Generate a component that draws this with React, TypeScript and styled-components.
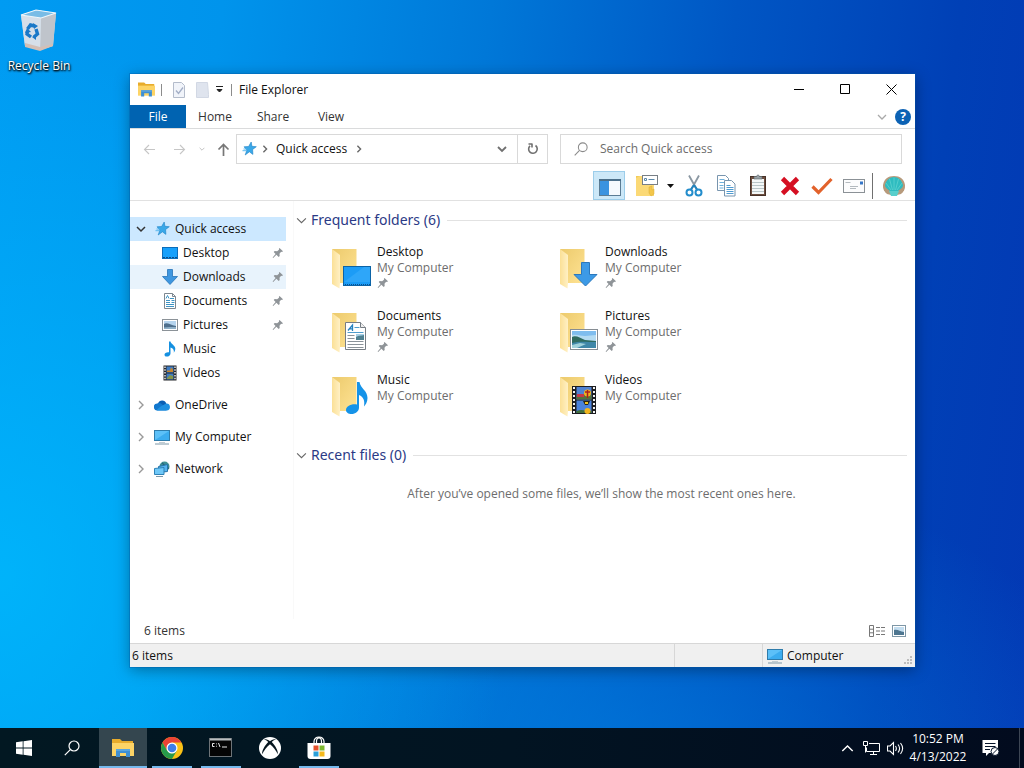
import React from "react";
import styled, { createGlobalStyle, css } from "styled-components";

const GlobalStyle = createGlobalStyle`
  *, *::before, *::after { box-sizing: border-box; }
  body {
    margin: 0;
    font-family: "Open Sans", "Noto Sans", sans-serif;
    font-size: 12px;
    line-height: 16px;
    color: #111;
  }
  button, input {
    font: inherit;
    color: inherit;
    margin: 0;
    padding: 0;
    border: 0;
    background: none;
  }
  button { display: flex; align-items: center; }
  svg { display: block; flex: none; }
  h2, p, ul { margin: 0; padding: 0; font-weight: 400; }
  ul { list-style: none; }
`;

/* ---------- Desktop ---------- */

const Screen = styled.div`
  display: flex;
  flex-direction: column;
  min-height: 100vh;
  background:
    radial-gradient(ellipse 50% 70% at 0% 75%, rgba(0, 190, 255, 0.7), rgba(0, 190, 255, 0) 100%),
    radial-gradient(ellipse 50% 40% at 60% 100%, rgba(0, 130, 225, 0.6), rgba(0, 130, 225, 0) 100%),
    linear-gradient(97deg, #009bf2 0%, #0094ec 20%, #0078d8 44%, #0056c4 66%, #0040b6 86%, #0338b4 100%);
`;

const Desktop = styled.main`
  position: relative;
  display: flex;
  flex: 1;
  padding: 74px 109px 61px 130px;
`;

const DesktopShortcut = styled.button`
  position: absolute;
  top: 6px;
  left: 2px;
  width: 74px;
  flex-direction: column;
  gap: 4px;
  color: #fff;
  text-shadow: 0 1px 2px #000, 1px 1px 2px #000;
  white-space: nowrap;
`;

/* ---------- Window frame ---------- */

const Window = styled.section`
  display: flex;
  flex-direction: column;
  flex: 1;
  min-width: 0;
  background: #fff;
  box-shadow: 0 0 0 1px rgba(0, 90, 170, 0.35), 0 3px 14px rgba(0, 0, 0, 0.35);
`;

const TitleBar = styled.header`
  display: flex;
  align-items: center;
  height: 31px;
  padding: 0 1px 0 7px;
`;

const QuickTools = styled.div`
  display: flex;
  align-items: center;
  flex: 1;
`;

const QuickButton = styled.button<{ $width: number }>`
  width: ${(p) => p.$width}px;
  height: 22px;
  justify-content: center;
`;

const TitleDivider = styled.span`
  width: 1px;
  height: 12px;
  background: #8c8c8c;
`;

const FirstDivider = styled(TitleDivider)`
  margin-left: 5px;
`;

const WindowTitle = styled.span`
  padding-left: 7px;
`;

const CaptionButton = styled.button`
  width: 46px;
  height: 30px;
  justify-content: center;
`;

const TabStrip = styled.nav`
  display: flex;
  align-items: stretch;
  height: 24px;
  border-bottom: 1px solid #dadbdc;
`;

const Tab = styled.button<{ $active?: boolean }>`
  justify-content: center;
  width: 58px;
  color: #333;
  ${(p) =>
    p.$active &&
    css`
      width: 56px;
      background: #0063b1;
      color: #fff;
    `}
`;

const TabTools = styled.div`
  display: flex;
  align-items: center;
  gap: 8px;
  margin-left: auto;
  padding-right: 4px;
`;

const NavRow = styled.div`
  display: grid;
  grid-template-columns: auto minmax(0, 312fr) minmax(0, 342fr);
  column-gap: 12px;
  align-items: center;
  height: 40px;
  padding: 0 13px 0 4px;
`;

const NavButtons = styled.div`
  display: flex;
  margin-right: -12px;
`;

const NavButton = styled.button<{ $width: number }>`
  width: ${(p) => p.$width}px;
  height: 30px;
  justify-content: center;
`;

const AddressBar = styled.div`
  display: flex;
  align-items: center;
  height: 30px;
  border: 1px solid #d9d9d9;
`;

const Crumb = styled.button<{ $icon?: boolean }>`
  height: 28px;
  padding: 0 ${(p) => (p.$icon ? 4 : 8)}px;
`;

const CrumbArrow = styled.button`
  height: 28px;
  width: 7px;
  justify-content: center;
`;

const AddressButton = styled.button<{ $divided?: boolean }>`
  width: 30px;
  height: 28px;
  justify-content: center;
  border-left: ${(p) => (p.$divided ? "1px solid #d9d9d9" : "0")};
`;

const Spacer = styled.span`
  flex: 1;
`;

const SearchBox = styled.label`
  display: flex;
  align-items: center;
  height: 30px;
  padding-left: 13px;
  gap: 12px;
  border: 1px solid #d9d9d9;
`;

const SearchInput = styled.input`
  flex: 1;
  min-width: 0;
  outline: none;
  &::placeholder { color: #6d6d6d; opacity: 1; }
`;

const Toolbar = styled.div`
  display: flex;
  align-items: center;
  justify-content: flex-end;
  height: 32px;
  padding: 2px 5px 0 0;
  border-bottom: 1px solid #e1e1e1;
`;

const ToolButton = styled.button<{ $narrow?: boolean; $pressed?: boolean }>`
  width: ${(p) => (p.$narrow ? 16 : 32)}px;
  height: 29px;
  justify-content: center;
  ${(p) =>
    p.$pressed &&
    css`
      margin-right: 5px;
      padding: 3px 0 0 2px;
      background: #cce8f8;
      border: 1px solid #9ccdea;
    `}
`;

const ToolDivider = styled.span`
  width: 1px;
  height: 26px;
  margin: 0 5px 0 2px;
  background: #707070;
`;

/* ---------- Window body ---------- */

const Body = styled.div`
  display: flex;
  flex: 1;
`;

const Sidebar = styled.nav`
  width: 164px;
  padding: 16px 7px 0 0;
  border-right: 1px solid #f9f9f9;
`;

const TreeGroup = styled.ul`
  margin-bottom: 8px;
`;

const TreeRow = styled.button<{ $child?: boolean; $state?: "selected" | "hover" }>`
  width: 100%;
  height: 24px;
  padding: 0 2px 0 ${(p) => (p.$child ? 32 : 5)}px;
  background: ${(p) =>
    p.$state === "selected" ? "#cce8ff" : p.$state === "hover" ? "#e8f3fc" : "transparent"};
`;

const Twisty = styled.span`
  display: flex;
  justify-content: center;
  width: 11px;
  margin-right: 8px;
`;

const TreeLabel = styled.span`
  flex: 1;
  padding-left: 5px;
  text-align: left;
  white-space: nowrap;
`;

const Content = styled.section`
  flex: 1;
  min-width: 0;
  padding: 7px 8px 0 2px;
`;

const GroupHeading = styled.h2`
  display: flex;
  align-items: center;
  height: 24px;
  gap: 4px;
  font-family: "Noto Sans", "Open Sans", sans-serif;
  font-size: 14px;
  line-height: 24px;
  color: #2b3a86;
  &::after {
    content: "";
    flex: 1;
    height: 1px;
    margin-left: 3px;
    background: #e2e2e2;
  }
`;

const TileGrid = styled.ul`
  display: grid;
  grid-template-columns: repeat(auto-fill, 228px);
  grid-auto-rows: 64px;
  margin: 12px 0 7px;
  padding-left: 35px;
`;

const Tile = styled.li`
  display: flex;
`;

const TileText = styled.div`
  display: flex;
  flex-direction: column;
`;

const Muted = styled.span`
  color: #6d6d6d;
`;

const EmptyNote = styled.p`
  padding-top: 19px;
  text-align: center;
  color: #6d6d6d;
`;

const InfoBar = styled.div`
  display: flex;
  align-items: center;
  justify-content: space-between;
  height: 24px;
  padding: 0 9px 0 14px;
  color: #333;
`;

const ViewButtons = styled.div`
  display: flex;
  gap: 6px;
`;

const StatusBar = styled.footer`
  display: flex;
  align-items: stretch;
  height: 24px;
  background: #f0f0f0;
  border-top: 1px solid #d7d7d7;
`;

const StatusCell = styled.div<{ $width?: number }>`
  display: flex;
  align-items: center;
  gap: 4px;
  padding-left: ${(p) => (p.$width ? 4 : 2)}px;
  ${(p) =>
    p.$width
      ? css`
          width: ${p.$width}px;
          border-left: 1px solid #d7d7d7;
        `
      : css`
          flex: 1;
        `}
`;

const Grip = styled.span`
  display: flex;
  align-self: flex-end;
  margin-left: auto;
  padding: 0 2px 2px 0;
`;

/* ---------- Taskbar ---------- */

const Taskbar = styled.footer`
  display: flex;
  height: 40px;
  background: linear-gradient(90deg, #021822, #021422 50%, #020b1e);
  color: #fff;
`;

const TaskButton = styled.button<{ $active?: boolean; $running?: boolean }>`
  position: relative;
  width: 48px;
  height: 40px;
  justify-content: center;
  background: ${(p) => (p.$active ? "#34464f" : "transparent")};
  &::after {
    content: "";
    position: absolute;
    bottom: 0;
    left: ${(p) => (p.$active ? 0 : 4)}px;
    right: ${(p) => (p.$active ? 0 : 4)}px;
    height: 2px;
    background: ${(p) => (p.$running ? "#76b9ed" : "transparent")};
  }
`;

const TaskApps = styled.div`
  display: flex;
  gap: 1px;
  margin-left: 3px;
`;

const Tray = styled.div`
  display: flex;
  align-items: center;
  margin-left: auto;
`;

const TrayButton = styled.button<{ $wide?: boolean }>`
  width: ${(p) => (p.$wide ? 52 : 24)}px;
  height: 40px;
  padding-right: ${(p) => (p.$wide ? 4 : 0)}px;
  justify-content: center;
`;

const Clock = styled.button`
  flex-direction: column;
  justify-content: center;
  width: 58px;
  height: 40px;
  margin-left: 2px;
  line-height: 18px;
  white-space: nowrap;
`;

const ShowDesktop = styled.button`
  width: 5px;
  height: 40px;
  border-left: 1px solid #3d4654;
`;

/* ---------- Small glyphs ---------- */

const Chevron = ({ dir, color = "#555", size = 10, weight = 1 }: { dir: "down" | "right" | "up"; color?: string; size?: number; weight?: number }) => (
  <svg width={size} height={size} viewBox="0 0 10 10" fill="none" stroke={color} strokeWidth={weight}>
    <path d={dir === "down" ? "M1 3l4 4 4-4" : dir === "up" ? "M1 7l4-4 4 4" : "M3 1l4 4-4 4"} />
  </svg>
);

const Pin = () => (
  <svg width="12" height="14" viewBox="0 0 12 14">
    <path d="M7.500 2L11 5.200l-1 .7-.9-.1-1.600 1.900.2 2.200-1 1-2.300-2.200L1.200 12l-.6-.5L3.600 8 1.700 6l1-1 2.400.2L7 3.800l-.1-1z" fill="#8f9498" />
  </svg>
);

const StarIcon = () => (
  <svg width="16" height="16" viewBox="0 0 16 16">
    <path d="M10.200 1l.7 4.300 4.400.4-3.700 2.800.3 4.900-3.500-2.600-4.200 3.200 1.700-5L3 5.800l4.600-.3z" fill="#3aa8e8" stroke="#1c82c6" strokeWidth=".6" />
    <path d="M2.500 8h3.500M1.500 9.700h4" stroke="#4cb2ee" strokeWidth=".9" />
  </svg>
);

const DesktopArt = () => (
  <>
    <rect x=".5" y="2.500" width="15" height="11" fill="#16a0fb" stroke="#0b6dba" />
    <path d="M1 12.500h14" stroke="#0a4c86" strokeWidth="1" strokeDasharray="2 1" />
  </>
);

const ArrowIcon = () => <path d="M5.500.5h5v7h5L8 15.500.5 7.500h5z" fill="#3f97e0" stroke="#2673b8" strokeWidth=".8" />;

const DocIcon = () => (
  <>
    <path d="M2.500.5h8l3 3v12h-11z" fill="#fff" stroke="#7d8790" />
    <path d="M10.500.5v3h3" fill="none" stroke="#7d8790" />
    <path d="M4 5.500L5.500 2.500 7 5.500M8 5.500h4M4 7.500h4M9.500 7.500h3M4 9.500h4M9.500 9.500h3M4 11.500h8M4 13.500h8" stroke="#3f94c4" fill="none" />
  </>
);

const PictureArt = () => (
  <>
    <rect x=".5" y="2.500" width="15" height="11" fill="#fff" stroke="#8b9298" />
    <rect x="2" y="4" width="12" height="8" fill="#b5d4ee" />
    <path d="M2 7c3-2 6 1 12 2v3H2z" fill="#4e6f8c" />
    <path d="M2 10.500c4-1 8-.5 12-.5v2H2z" fill="#8fb0c8" />
  </>
);

const MusicIcon = () => (
  <path d="M7 .5h1.500c.4 2.600 4.800 3.800 4.800 7.300 0 1.800-1 3.400-1.500 3.900.5-2.800-.5-4.400-3.300-5.300v6.100c0 2-1.900 3.100-3.600 3.100-1.400 0-2.400-.7-2.400-1.900 0-1.500 1.900-2.700 4.500-2.400z" fill="#1590e0" />
);

const FilmIcon = () => (
  <>
    <rect x="1.500" y=".5" width="13" height="15" fill="#26282c" />
    <path d="M3 1.500v13M13 1.500v13" stroke="#f1f1f1" strokeWidth="1.400" strokeDasharray="1.500 1.300" />
    <rect x="4.500" y="1.500" width="7" height="6" fill="#3f7cc4" />
    <rect x="4.500" y="8.500" width="7" height="6" fill="#3f7cc4" />
    <path d="M5 5.500h3l1-3 2 2v2.500H5z" fill="#c8862c" />
    <path d="M5 13l3-3 3 1v3H5z" fill="#84954a" />
  </>
);

const CloudIcon = () => (
  <>
    <path d="M4 6.500A4.400 4.400 0 0 1 12.300 6.500L9 10 3 12z" fill="#0a5fb4" />
    <path d="M3.500 13.500a3.500 3.500 0 0 1-.3-7c2-1 4-.4 5 1l5 4.900-1 1.100z" fill="#1278ce" />
    <path d="M2.500 13.300c2-2.800 5-4.200 9.500-6.800a3.500 3.500 0 0 1 .8 7h-9.300z" fill="#1e90e0" />
  </>
);

const ComputerArt = () => (
  <>
    <rect x=".5" y="1.500" width="15" height="10" fill="#5cc0f8" stroke="#2f7cab" />
    <path d="M1 11l14-9v9z" fill="#3bacef" />
    <path d="M5 13.500h6" stroke="#c1ccd3" />
    <path d="M1 15h14" stroke="#7c98a8" />
  </>
);

const NetworkArt = () => (
  <>
    <circle cx="10.500" cy="5.500" r="5" fill="#3d8f92" />
    <path d="M8 2c2 1 2 3 4 3s1 3 3 2" stroke="#27607c" strokeWidth="1.200" fill="none" />
    <path d="M4.500 5.500l9-2v7l-9 1z" fill="#56b4ee" stroke="#2674ac" />
    <path d="M.5 7.500l9.500-1v7H.5z" fill="#6fc8f8" stroke="#2f83b8" />
    <path d="M2 15.500h7" stroke="#7c98a8" />
  </>
);

const smallArt = {
  desktop: DesktopArt,
  downloads: ArrowIcon,
  documents: DocIcon,
  pictures: PictureArt,
  music: MusicIcon,
  videos: FilmIcon,
  cloud: CloudIcon,
  computer: ComputerArt,
  network: NetworkArt,
};

type ArtName = keyof typeof smallArt;

const SmallIcon = ({ name }: { name: ArtName }) => {
  const Art = smallArt[name];
  return (
    <svg width="16" height="16" viewBox="0 0 16 16">
      <Art />
    </svg>
  );
};

/* ---------- Folder tiles ---------- */

const overlays: Record<string, React.ReactNode> = {
  desktop: (
    <>
      <rect x="12.500" y="22.500" width="27" height="19" fill="#1c9cf6" stroke="#0c63a6" />
      <path d="M13 38L33 23h6v15z" fill="#3aaefb" opacity=".6" />
      <path d="M14 40.500h25" stroke="#0b4f8c" strokeDasharray="1 1" />
    </>
  ),
  downloads: <path d="M22.500 18.500h8v12h7.500L26.500 42 15 30.500h7.500z" fill="#3d9ae6" stroke="#2b78bd" />,
  documents: (
    <>
      <path d="M14.500 14.500h15l5 5v22h-20z" fill="#fff" stroke="#767d84" />
      <path d="M29.500 14.500v5h5" fill="#eee" stroke="#767d84" />
      <path d="M17 22.500l4.500-5.500v6M18.500 20.800h3" stroke="#2481c0" strokeWidth="1.300" fill="none" />
      <path d="M23.500 19.500h5M16.500 24.500h16" stroke="#4f9ccc" />
      <path d="M16.500 27.500h7M16.500 30.500h7M16.500 33.500h16M16.500 36.500h16M16.500 39.500h16" stroke="#8a9299" />
      <rect x="25" y="26" width="8" height="6" fill="#4f8191" />
      <path d="M25 29c3-2 5-1 8-2v-1h-8z" fill="#a5cfe6" />
    </>
  ),
  pictures: (
    <>
      <rect x="11.500" y="21.500" width="27" height="20" fill="#fff" stroke="#868d93" />
      <rect x="13" y="23" width="24" height="17" fill="#7fbdee" />
      <path d="M13 27c5-1 9 1 13 1s7-1 11-1v6H13z" fill="#b4dbf2" />
      <path d="M13 29c4-2 8 1 13 3l11 1v2H13z" fill="#2f6b60" />
      <path d="M13 35c7-2 14-1 24-1v6H13z" fill="#3f87a8" />
      <path d="M13 37l8-2 6 1-9 4h-5z" fill="#9fd0da" />
    </>
  ),
  music: (
    <path d="M26 10h2.500c1 6.500 8 8.500 8 16 0 4-2 7-3.500 8.500 1-6-.5-9.500-5-11.500v12.500c0 4-3.800 6.500-7.500 6.500-3 0-5.500-1.500-5.500-4 0-3.500 5-6.500 11-5.500z" fill="#1593e8" />
  ),
  videos: (
    <>
      <rect x="13" y="14" width="24" height="28" fill="#1c1d20" />
      <path d="M15 15v27M35 15v27" stroke="#f4f4f4" strokeWidth="2" strokeDasharray="2 2" />
      <rect x="17.500" y="15" width="15" height="12.500" fill="#5082d2" />
      <rect x="17.500" y="28.500" width="15" height="12.500" fill="#4a82dc" />
      <path d="M17.500 23c4-2 8 0 15 0v4.500h-15z" fill="#54723c" />
      <path d="M17.500 39c5-2 9 0 15 0v2h-15z" fill="#42703c" />
      <path d="M18 22h7v3h-7z" fill="#c7384a" />
      <circle cx="28.500" cy="21" r="3.500" fill="#f1b51f" />
      <path d="M26 20h5M28.500 18v8" stroke="#a82020" strokeWidth="1.500" />
      <path d="M24 29h7l-2 4h-3z" fill="#2b2413" />
      <path d="M26 30h3v2h-3z" fill="#f1c21f" />
      <circle cx="28.500" cy="39" r="3" fill="#f1b51f" />
    </>
  ),
};

const FolderIcon = ({ kind }: { kind: string }) => (
  <svg width="46" height="48" viewBox="0 0 46 48">
    <defs>
      <linearGradient id={`back-${kind}`} x1="0" y1="0" x2="1" y2="1">
        <stop offset="0" stopColor="#ecca6c" />
        <stop offset="1" stopColor="#ffe394" />
      </linearGradient>
      <linearGradient id={`flap-${kind}`} x1="0" y1="0" x2="1" y2="0">
        <stop offset="0" stopColor="#fbe096" />
        <stop offset="1" stopColor="#fff0c4" />
      </linearGradient>
    </defs>
    <path d="M1 5h24.500v34H9z" fill={`url(#back-${kind})`} />
    <path d="M1 5l8 6v28l-.5 5.500L1 40z" fill={`url(#flap-${kind})`} />
    {overlays[kind]}
  </svg>
);

/* ---------- Application glyphs ---------- */

const ExplorerIcon = ({ width, height }: { width: number; height: number }) => (
  <svg width={width} height={height} viewBox="0 0 22 18">
    <path d="M0 0h8l2 2h11v4H0z" fill="#e8ac2c" />
    <path d="M0 4h22v13H0z" fill="#fdd466" />
    <path d="M4 18v-8h14v8h-4v-4H8v4z" fill="#3f8fd2" />
    <path d="M4 10h14v2H4z" fill="#5aa5de" />
  </svg>
);

const RecycleBinIcon = () => (
  <svg width="40" height="48" viewBox="0 0 40 48">
    <path d="M2 9l15-5 20 3-3 33-14 4-14-4z" fill="#d5dbe2" opacity=".95" />
    <path d="M22 12l15-5-3 33-13 4z" fill="#bfc4cb" />
    <path d="M2 9l20 3-1 32-15-4z" fill="#d6dfe9" />
    <path d="M2 9l15-5 20 3-15 5z" fill="#79bce6" stroke="#eef6fb" strokeWidth="1.200" />
    <path d="M6 37l15 4 13-3v2l-13 5-15-4z" fill="#d3bfb6" />
    <g fill="none" stroke="#1a78c8" strokeWidth="3.400">
      <path d="M8.500 23l3-4 4 1" />
      <path d="M17 23l1.500 5-3.500 3" />
      <path d="M12 31l-4-3 .5-3" />
    </g>
    <path d="M14 17l5 3-4 3zM17 28l-4 3 4 3zM6 27l2-5 4 4z" fill="#1a78c8" />
  </svg>
);

const WindowsLogo = () => (
  <svg width="16" height="16" viewBox="0 0 16 16" fill="#fff">
    <path d="M0 2.200l6.700-.9v6.300H0zM7.500 1.200L16 0v7.600H7.500zM0 8.400h6.700v6.300L0 13.800zM7.500 8.400H16V16l-8.500-1.200z" />
  </svg>
);

const SearchGlyph = ({ size, color }: { size: number; color: string }) => (
  <svg width={size} height={size} viewBox="0 0 16 16" fill="none" stroke={color} strokeWidth="1.200">
    <circle cx="10" cy="6" r="5" />
    <path d="M6.300 9.700L.8 15.200" />
  </svg>
);

const ChromeIcon = () => (
  <svg width="24" height="24" viewBox="0 0 24 24">
    <circle cx="12" cy="12" r="11" fill="#fbc116" />
    <path d="M2.500 6.500A11 11 0 0 1 21.500 6.500H12L7.200 14.700z" fill="#ea4335" />
    <path d="M2.500 6.500A11 11 0 0 0 12 23l4.800-8.200L12 17.500 7.200 14.700z" fill="#279a4b" />
    <circle cx="12" cy="12" r="5.500" fill="#fff" />
    <circle cx="12" cy="12" r="4.300" fill="#3f7ee8" />
  </svg>
);

const TerminalIcon = () => (
  <svg width="24" height="20" viewBox="0 0 24 20">
    <rect x=".5" y=".5" width="22" height="18" fill="#050505" stroke="#6e7478" />
    <path d="M1 1.500h21" stroke="#b9bec1" strokeWidth="2" />
    <path d="M5.500 5.500H3.500v3h2M7.500 5.500v.8M7.500 7.800v.8M9.500 5l1.500 4M13 9h5" stroke="#e8e8e8" fill="none" />
  </svg>
);

const XboxIcon = () => (
  <svg width="22" height="22" viewBox="0 0 22 22">
    <circle cx="11" cy="11" r="11" fill="#fff" />
    <path d="M5 2.400C7.500 1.600 9.500 3 11 4.200c1.500-1.200 3.500-2.600 6-1.800-1.200 0-3 1-4.200 2.600 3.500 3.500 6.500 8.800 6 12.200C17.200 13.300 14 9.600 11 7.200c-3 2.400-6.200 6.100-7.800 10-.5-3.400 2.500-8.700 6-12.200C8 3.400 6.200 2.400 5 2.400z" fill="#06161f" />
  </svg>
);

const StoreIcon = () => (
  <svg width="24" height="24" viewBox="0 0 24 24">
    <path d="M7 8V5.500a5 4.500 0 0 1 10 0V8M9.500 7V5.500a2.500 3.500 0 0 1 5 0V7" fill="none" stroke="#fff" strokeWidth="1.200" />
    <path d="M.5 7h23v13c0 2-1 3-3 3h-17c-2 0-3-1-3-3z" fill="#fff" />
    <path d="M6.500 9.500h5v5h-5z" fill="#e2502c" />
    <path d="M12.500 9.500h5v5h-5z" fill="#7db72f" />
    <path d="M6.500 15.500h5v5h-5z" fill="#2a9fd8" />
    <path d="M12.500 15.500h5v5h-5z" fill="#f5b91d" />
  </svg>
);

/* ---------- Toolbar glyphs ---------- */

const PanelIcon = () => (
  <svg width="22" height="17" viewBox="0 0 22 17">
    <rect x=".5" y=".5" width="21" height="16" fill="#f4f9fd" stroke="#5b7c94" />
    <path d="M0 1h22" stroke="#4a6f8a" strokeWidth="2" />
    <rect x="1" y="2" width="9" height="14" fill="#3a93e0" />
  </svg>
);

const FolderOptionsIcon = () => (
  <svg width="24" height="24" viewBox="0 0 24 24">
    <path d="M2 2h10v20H2z" fill="#f2cb58" />
    <path d="M2 4l4-2h14v20H2z" fill="#fbd976" />
    <rect x="8.500" y="1.500" width="15" height="9" fill="#fff" stroke="#787f85" />
    <path d="M10.500 4.500h2v2h-2zM14.500 5.500h6" stroke="#5a87a8" fill="none" />
    <path d="M15 19v-6l3-1v4l2-1v5l-3 2z" fill="#f3c64a" stroke="#d8ae3e" strokeWidth=".5" />
  </svg>
);

const ScissorsIcon = () => (
  <svg width="18" height="24" viewBox="0 0 18 24" fill="none">
    <path d="M4 1.500L11.500 15M14 1.500L6.500 15" stroke="#8a97a2" strokeWidth="1.800" />
    <path d="M9 11l3.500 5M9 11l-3.500 5" stroke="#2384be" strokeWidth="2" />
    <circle cx="4.500" cy="18.500" r="3" stroke="#238dcc" strokeWidth="2" />
    <circle cx="13.500" cy="18.500" r="3" stroke="#238dcc" strokeWidth="2" />
  </svg>
);

const CopyIcon = () => (
  <svg width="20" height="22" viewBox="0 0 20 22" fill="#fff" stroke="#7895ae">
    <path d="M1.500.5h8l3 3v12h-11z" />
    <path d="M3.500 4.500h5M3.500 7.500h6M3.500 10.500h4M3.500 13h4" stroke="#6fb0dc" />
    <path d="M8.500 5.500h7l3.500 3.500v12H8.500z" />
    <path d="M10.500 10.500h4M10.500 12.500h7M10.500 14.500h7M10.500 16.500h7M10.500 18.500h7" stroke="#4f9ad0" />
  </svg>
);

const PasteIcon = () => (
  <svg width="18" height="23" viewBox="0 0 18 23">
    <rect x="1.500" y="2.500" width="15" height="19" fill="#6e4f40" stroke="#473228" />
    <rect x="3" y="5" width="12" height="15" fill="#f4f8f8" />
    <path d="M3 8.500h12M3 11.500h12M3 14.500h12M3 17.500h12" stroke="#b9c6c8" />
    <path d="M5 5V2.500h2.500C8 .5 10 .5 10.500 2.500H13V5z" fill="#98a1a6" stroke="#5b646a" strokeWidth=".6" />
  </svg>
);

const CrossIcon = () => (
  <svg width="20" height="20" viewBox="0 0 20 20">
    <path d="M2.500 2.500l15 15M17.500 2.500l-15 15" stroke="#d50f22" strokeWidth="4.600" />
  </svg>
);

const CheckIcon = () => (
  <svg width="22" height="18" viewBox="0 0 22 18">
    <path d="M1.500 9.500l6 6L20.500 2" stroke="#e2622b" strokeWidth="3.200" fill="none" />
  </svg>
);

const MailIcon = () => (
  <svg width="22" height="14" viewBox="0 0 22 14">
    <rect x=".5" y=".5" width="21" height="13" fill="#fcfcfd" stroke="#8b9196" />
    <path d="M2.500 3.500h5M7 7.500h8M7 9.500h6" stroke="#b4babf" />
    <rect x="17" y="2.500" width="3" height="3" fill="#3576c8" />
  </svg>
);

const ShellIcon = () => (
  <svg width="24" height="22" viewBox="0 0 24 22">
    <path d="M1 10C2 4 6 1 12 1s10 3 11 9c.5 4-1.500 7-4 9l-4 1H9l-4-1c-2.500-2-4.500-5-4-9z" fill="#b79a7c" />
    <path d="M3 10c1-5 5-8 9-8s8 3 9 8c0 3-3 4-5 6H8c-2-2-5-3-5-6z" fill="#2fbcc0" />
    <path d="M12 15V2.500M10.500 15L7.500 4M13.500 15l3-11M9 15L4 8M15 15l5-7" stroke="#66d6d2" strokeWidth=".7" />
    <path d="M7 16h10l-2 5H9z" fill="#58cfcc" />
  </svg>
);

const HelpIcon = () => (
  <svg width="16" height="16" viewBox="0 0 16 16">
    <circle cx="8" cy="8" r="8" fill="#0c62b4" />
    <text x="8" y="12" textAnchor="middle" fontSize="12" fontWeight="700" fill="#fff">?</text>
  </svg>
);

const Arrow = ({ dir, color }: { dir: "left" | "right" | "up"; color: string }) => (
  <svg width="13" height="13" viewBox="0 0 13 13" fill="none" stroke={color} strokeWidth={dir === "up" ? 1.7 : 1.1}>
    <path d={dir === "left" ? "M12 6.500H1.500M6 2L1.500 6.500 6 11" : dir === "right" ? "M1 6.500h10.500M7 2l4.500 4.500L7 11" : "M6.500 13V1.500M1.500 6.500l5-5 5 5"} />
  </svg>
);

/* ---------- Data ---------- */

const quickItems: { label: string; art: ArtName; pinned?: boolean }[] = [
  { label: "Desktop", art: "desktop", pinned: true },
  { label: "Downloads", art: "downloads", pinned: true },
  { label: "Documents", art: "documents", pinned: true },
  { label: "Pictures", art: "pictures", pinned: true },
  { label: "Music", art: "music" },
  { label: "Videos", art: "videos" },
];

const roots: { label: string; art: ArtName }[] = [
  { label: "OneDrive", art: "cloud" },
  { label: "My Computer", art: "computer" },
  { label: "Network", art: "network" },
];

export default function App() {
  return (
    <Screen>
      <GlobalStyle />
      <Desktop>
        <DesktopShortcut>
          <RecycleBinIcon />
          Recycle Bin
        </DesktopShortcut>

        <Window aria-label="File Explorer">
          <TitleBar>
            <QuickTools>
              <QuickButton $width={19} aria-label="Window menu">
                <ExplorerIcon width={17} height={15} />
              </QuickButton>
              <FirstDivider />
              <QuickButton $width={34} aria-label="Properties">
                <svg width="14" height="16" viewBox="0 0 14 16" fill="#f1f4fa" stroke="#b4bccb">
                  <path d="M1.500.5h8l3 3v12h-11z" />
                  <path d="M4 8.500l2.500 3 4.500-6" fill="none" stroke="#a3aec6" strokeWidth="1.300" />
                </svg>
              </QuickButton>
              <QuickButton $width={12} aria-label="New folder">
                <svg width="13" height="16" viewBox="0 0 13 16">
                  <path d="M.5.5h11l1 12v3H.5z" fill="#dfe4ee" stroke="#d2d8e4" />
                </svg>
              </QuickButton>
              <QuickButton $width={23} aria-label="Customize toolbar">
                <svg width="7" height="7" viewBox="0 0 7 7">
                  <path d="M0 .5h7M1 3.500h5L3.500 6z" fill="#222" stroke="#222" />
                </svg>
              </QuickButton>
              <TitleDivider />
              <WindowTitle>File Explorer</WindowTitle>
            </QuickTools>
            <CaptionButton aria-label="Minimize">
              <svg width="11" height="11" stroke="#000"><path d="M0 5.500h10" /></svg>
            </CaptionButton>
            <CaptionButton aria-label="Maximize">
              <svg width="11" height="11" fill="none" stroke="#000"><path d="M.5.5h9v9h-9z" /></svg>
            </CaptionButton>
            <CaptionButton aria-label="Close">
              <svg width="11" height="11" stroke="#000"><path d="M.5.5l10 10M10.500.5l-10 10" /></svg>
            </CaptionButton>
          </TitleBar>

          <TabStrip>
            <Tab $active>File</Tab>
            <Tab>Home</Tab>
            <Tab>Share</Tab>
            <Tab>View</Tab>
            <TabTools>
              <button aria-label="Expand ribbon"><Chevron dir="down" color="#a9a9a9" weight={1.3} /></button>
              <button aria-label="Help"><HelpIcon /></button>
            </TabTools>
          </TabStrip>

          <NavRow>
            <NavButtons>
              <NavButton $width={30} aria-label="Back"><Arrow dir="left" color="#c6c6c6" /></NavButton>
              <NavButton $width={30} aria-label="Forward"><Arrow dir="right" color="#c6c6c6" /></NavButton>
              <NavButton $width={16} aria-label="Recent locations"><Chevron dir="down" color="#bdbdbd" size={6} weight={1.5} /></NavButton>
              <NavButton $width={26} aria-label="Up"><Arrow dir="up" color="#777" /></NavButton>
            </NavButtons>
            <AddressBar>
              <Crumb $icon aria-label="Locations"><StarIcon /></Crumb>
              <CrumbArrow aria-label="Browse locations"><Chevron dir="right" color="#666" size={8} weight={1.7} /></CrumbArrow>
              <Crumb>Quick access</Crumb>
              <CrumbArrow aria-label="Browse quick access"><Chevron dir="right" color="#666" size={8} weight={1.7} /></CrumbArrow>
              <Spacer />
              <AddressButton aria-label="Previous locations"><Chevron dir="down" color="#707070" weight={1.8} /></AddressButton>
              <AddressButton $divided aria-label="Refresh">
                <svg width="12" height="12" viewBox="0 0 12 12" fill="none" stroke="#707070" strokeWidth="1.600">
                  <path d="M8.500 2.500A4.300 4.300 0 1 1 3 2.800M5 1H1.500M5 .5v4" />
                </svg>
              </AddressButton>
            </AddressBar>
            <SearchBox>
              <SearchGlyph size={14} color="#8a8a8a" />
              <SearchInput type="text" aria-label="Search Quick access" placeholder="Search Quick access" />
            </SearchBox>
          </NavRow>

          <Toolbar>
            <ToolButton $pressed aria-label="Navigation pane"><PanelIcon /></ToolButton>
            <ToolButton aria-label="Folder options"><FolderOptionsIcon /></ToolButton>
            <ToolButton $narrow aria-label="More folder options">
              <svg width="7" height="4"><path d="M0 0h7L3.500 4z" fill="#111" /></svg>
            </ToolButton>
            <ToolButton aria-label="Cut"><ScissorsIcon /></ToolButton>
            <ToolButton aria-label="Copy"><CopyIcon /></ToolButton>
            <ToolButton aria-label="Paste"><PasteIcon /></ToolButton>
            <ToolButton aria-label="Delete"><CrossIcon /></ToolButton>
            <ToolButton aria-label="Apply"><CheckIcon /></ToolButton>
            <ToolButton aria-label="Email"><MailIcon /></ToolButton>
            <ToolDivider />
            <ToolButton aria-label="Shell settings"><ShellIcon /></ToolButton>
          </Toolbar>

          <Body>
            <Sidebar aria-label="Folders">
              <TreeGroup>
                <li>
                  <TreeRow $state="selected">
                    <Twisty><Chevron dir="down" color="#333" weight={1.5} /></Twisty>
                    <StarIcon />
                    <TreeLabel>Quick access</TreeLabel>
                  </TreeRow>
                </li>
                {quickItems.map((item) => (
                  <li key={item.label}>
                    <TreeRow $child $state={item.label === "Downloads" ? "hover" : undefined}>
                      <SmallIcon name={item.art} />
                      <TreeLabel>{item.label}</TreeLabel>
                      {item.pinned && <Pin />}
                    </TreeRow>
                  </li>
                ))}
              </TreeGroup>
              {roots.map((item) => (
                <TreeGroup key={item.label}>
                  <li>
                    <TreeRow>
                      <Twisty><Chevron dir="right" color="#999" weight={1.4} /></Twisty>
                      <SmallIcon name={item.art} />
                      <TreeLabel>{item.label}</TreeLabel>
                    </TreeRow>
                  </li>
                </TreeGroup>
              ))}
            </Sidebar>

            <Content>
              <GroupHeading>
                <Chevron dir="down" color="#666" size={11} />
                Frequent folders (6)
              </GroupHeading>
              <TileGrid>
                {quickItems.map((item) => (
                  <Tile key={item.label}>
                    <FolderIcon kind={item.art} />
                    <TileText>
                      <span>{item.label}</span>
                      <Muted>My Computer</Muted>
                      {item.pinned && <Pin />}
                    </TileText>
                  </Tile>
                ))}
              </TileGrid>
              <GroupHeading>
                <Chevron dir="down" color="#666" size={11} />
                Recent files (0)
              </GroupHeading>
              <EmptyNote>After you’ve opened some files, we’ll show the most recent ones here.</EmptyNote>
            </Content>
          </Body>

          <InfoBar>
            6 items
            <ViewButtons>
              <button aria-label="Details view">
                <svg width="17" height="12" viewBox="0 0 17 12" fill="none" stroke="#777">
                  <path d="M.5.5h4v11h-4zM.5 4.200h4M.5 7.800h4" />
                  <path d="M7 2.500h10M7 6h10M7 9.500h10" strokeDasharray="4 1" />
                </svg>
              </button>
              <button aria-label="Large icons view">
                <svg width="14" height="12" viewBox="0 0 14 12">
                  <rect x=".5" y=".5" width="13" height="11" fill="#fff" stroke="#7e97a6" />
                  <rect x="2" y="2" width="10" height="8" fill="#c4def0" />
                  <path d="M2 5c4-1 6 2 10 2v3H2z" fill="#4e7690" />
                </svg>
              </button>
            </ViewButtons>
          </InfoBar>

          <StatusBar>
            <StatusCell>6 items</StatusCell>
            <StatusCell $width={88} />
            <StatusCell $width={153}>
              <SmallIcon name="computer" />
              Computer
              <Grip>
                <svg width="9" height="9" fill="#bdbdbd">
                  <path d="M6 0h2v2H6zM3 3h2v2H3zM6 3h2v2H6zM0 6h2v2H0zM3 6h2v2H3zM6 6h2v2H6z" />
                </svg>
              </Grip>
            </StatusCell>
          </StatusBar>
        </Window>
      </Desktop>

      <Taskbar>
        <TaskButton aria-label="Start"><WindowsLogo /></TaskButton>
        <TaskButton aria-label="Search"><SearchGlyph size={16} color="#fff" /></TaskButton>
        <TaskApps>
          <TaskButton $active $running aria-label="File Explorer"><ExplorerIcon width={22} height={18} /></TaskButton>
          <TaskButton $running aria-label="Chrome"><ChromeIcon /></TaskButton>
          <TaskButton $running aria-label="Command Prompt"><TerminalIcon /></TaskButton>
          <TaskButton aria-label="Xbox"><XboxIcon /></TaskButton>
          <TaskButton $running aria-label="Store"><StoreIcon /></TaskButton>
        </TaskApps>
        <Tray>
          <TrayButton aria-label="Show hidden icons"><Chevron dir="up" color="#fff" size={13} weight={1.1} /></TrayButton>
          <TrayButton aria-label="Network">
            <svg width="17" height="15" viewBox="0 0 17 15" fill="none" stroke="#fff">
              <path d="M6 2.500h10.500v8H3.500V6.500" />
              <path d="M10.500 10.500v3M7 13.500h7M.5.500h4v4h-4zM2.500 4.500v7" />
            </svg>
          </TrayButton>
          <TrayButton aria-label="Volume">
            <svg width="17" height="15" viewBox="0 0 17 15" fill="none" stroke="#fff" strokeWidth="1.100">
              <path d="M.5 5h2.500L6.500 1.500v12L3 10H.5z" />
              <path d="M8.500 5c1 1.500 1 3.500 0 5M11 3.500c2 2.500 2 5.500 0 8M13.500 2c2.700 3.500 2.700 7.500 0 11" />
            </svg>
          </TrayButton>
          <Clock>
            <span>10:52 PM</span>
            <span>4/13/2022</span>
          </Clock>
          <TrayButton $wide aria-label="Notifications">
            <svg width="18" height="16" viewBox="0 0 18 16">
              <path d="M.5 0h15.500v13H7l-3 3v-3H.500z" fill="#fff" />
              <path d="M3 3.500h10.500M3 6.500h10.500M3 9.500h5" stroke="#06142a" />
              <circle cx="13" cy="11.500" r="4" fill="#fff" stroke="#06142a" />
              <path d="M10.500 14l5-5" stroke="#06142a" />
            </svg>
          </TrayButton>
          <ShowDesktop aria-label="Show desktop" />
        </Tray>
      </Taskbar>
    </Screen>
  );
}
